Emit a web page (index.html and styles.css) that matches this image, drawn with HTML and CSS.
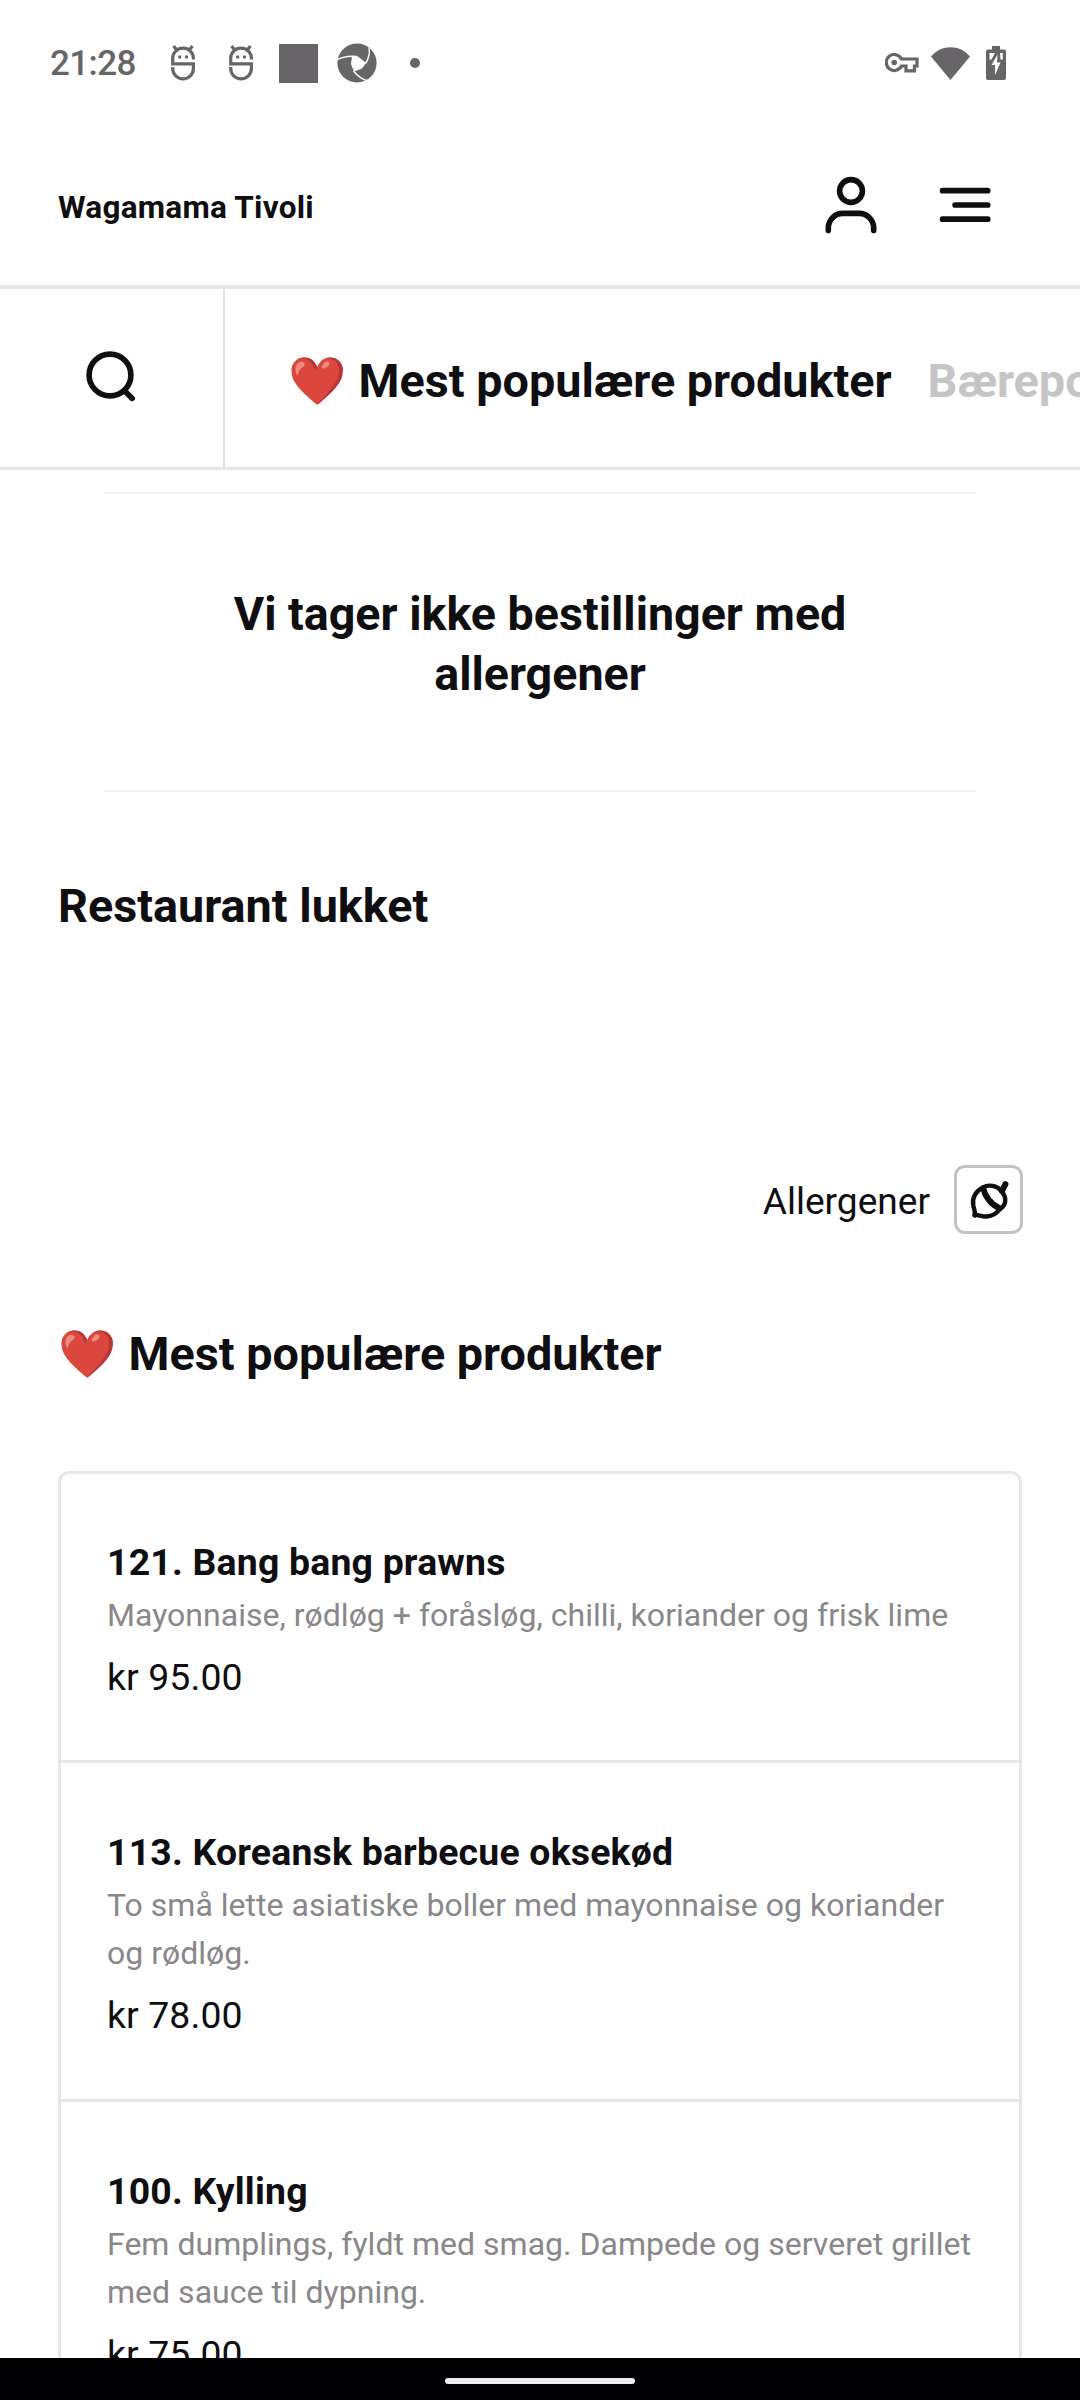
FILE: index.html
```html
<!DOCTYPE html>
<html lang="da">
<head>
<meta charset="utf-8">
<title>Wagamama Tivoli</title>
<link rel="stylesheet" href="styles.css">
</head>
<body>
<div class="screen">
  <div class="status">
    <div class="status-left">
      <span class="time">21:28</span>
      <svg class="bug" viewBox="0 0 24 36"><g fill="none" stroke="#676568" stroke-width="3.2"><path d="M22.4 14.5V13A10.3 9.8 0 0 0 1.7 13v5.8H22.4V23.500a10.3 10.3 0 0 1-20.7 0V22"/><path d="M2.5 1l3.5 4.200M21.500 1L18 5.200"/></g><g fill="#676568"><circle cx="8.700" cy="12" r="1.700"/><circle cx="15.500" cy="12" r="1.700"/></g></svg>
      <svg class="bug" viewBox="0 0 24 36"><g fill="none" stroke="#676568" stroke-width="3.2"><path d="M22.4 14.5V13A10.3 9.8 0 0 0 1.7 13v5.8H22.4V23.500a10.3 10.3 0 0 1-20.7 0V22"/><path d="M2.5 1l3.5 4.200M21.500 1L18 5.200"/></g><g fill="#676568"><circle cx="8.700" cy="12" r="1.700"/><circle cx="15.500" cy="12" r="1.700"/></g></svg>
      <span class="square"></span>
      <svg class="swirl" viewBox="0 0 40 40"><circle cx="20" cy="20" r="19.600" fill="#676568"/><path d="M15 13.500L21 13.500L29 20L25 25.500L17 28.500L14 21Z" fill="#fefefe"/><g fill="none" stroke="#fefefe" stroke-width="1.400"><path d="M0 17Q7 12.500 20 13.500"/><path d="M32 4.500Q33.500 13 28.500 20.500"/><path d="M16.500 28Q23 36 31 38"/></g></svg>
      <span class="dot"></span>
    </div>
    <div class="status-right">
      <svg class="key" viewBox="0 0 34 20"><path d="M16.400 6A8 8 0 1 0 16.400 13H21V17.800H29.500V13H32V6Z" fill="none" stroke="#676568" stroke-width="3.200"/><circle cx="9.200" cy="9.500" r="2.800" fill="#676568"/></svg>
      <svg class="wifi" viewBox="0 0 39 33"><path d="M0 9.500C10-3 29-3 39 9.500L19.500 33Z" fill="#676568"/></svg>
      <svg class="battery" viewBox="0 0 20 34"><path d="M6 0h8v3.500h4a2 2 0 0 1 2 2V32a2 2 0 0 1-2 2H2a2 2 0 0 1-2-2V5.500a2 2 0 0 1 2-2H6Z" fill="#676568"/><path d="M3.500 7H9L5.500 13.500H3.500Z M14 7h2.800v6.500H14.500Z M11.500 8.500L5.500 19h3.500v10l5.500-12.500h-3.500Z" fill="#fefefe"/></svg>
    </div>
  </div>

  <header class="header">
    <span class="brand">Wagamama Tivoli</span>
    <svg class="user" viewBox="0 0 52 58" fill="none" stroke="#0f0e11" stroke-width="5.600" stroke-linecap="round"><circle cx="26" cy="15" r="11.400"/><path d="M3.300 54.400V52A14.600 14.600 0 0 1 17.900 37.400H34.100A14.600 14.600 0 0 1 48.700 52V54.400"/></svg>
    <svg class="menu" viewBox="0 0 52 36" stroke="#0f0e11" stroke-width="5.700" stroke-linecap="round"><path d="M3.600 3.700H48.700M16.100 18H48.700M3.600 32.200H48.700"/></svg>
  </header>

  <nav class="tabs">
    <div class="search"><svg viewBox="0 0 52 52" fill="none" stroke="#0f0e11" stroke-width="5.600"><circle cx="25" cy="25" r="20.900"/><path d="M40 41.300L47.200 48.400" stroke-linecap="round"/></svg></div>
    <div class="tab-list"><span class="tab active"><span class="heart">❤️</span> Mest populære produkter</span><span class="tab">Bærepose</span></div>
  </nav>

  <main class="content">
    <p class="notice">Vi tager ikke bestillinger med allergener</p>
    <h2 class="title closed">Restaurant lukket</h2>
    <div class="allergens">
      <span class="label">Allergener</span>
      <button class="nut" aria-label="Allergener"><svg viewBox="3 3 63 63" fill="none" stroke="#0f0e11" stroke-width="4.400" stroke-linecap="round" stroke-linejoin="round"><path d="M29.300 22.300C21.500 26 18 33 19.200 40C19.700 43.500 21.300 46 21 50C24.500 49.300 27.500 52 33 51.500C39 51 43 48 46 44"/><path d="M29.300 22.300C34.500 19 43 20.700 47.500 26C52.500 32 53 39.500 46 44"/><path d="M29.300 23.500C31 31.500 37 39.500 45 43" stroke-width="6"/><path d="M48 26L51.400 19.200" stroke-width="6"/><path d="M21 50h.1" stroke-width="5.500"/></svg></button>
    </div>
    <h2 class="title"><span class="heart">❤️</span> Mest populære produkter</h2>
    <section class="products">
      <article class="product">
        <h3 class="name">121. Bang bang prawns</h3>
        <p class="desc">Mayonnaise, rødløg + foråsløg, chilli, koriander og frisk lime</p>
        <p class="price">kr 95.00</p>
      </article>
      <article class="product">
        <h3 class="name">113. Koreansk barbecue oksekød</h3>
        <p class="desc">To små lette asiatiske boller med mayonnaise og koriander og rødløg.</p>
        <p class="price">kr 78.00</p>
      </article>
      <article class="product">
        <h3 class="name">100. Kylling</h3>
        <p class="desc">Fem dumplings, fyldt med smag. Dampede og serveret grillet med sauce til dypning.</p>
        <p class="price">kr 75.00</p>
      </article>
    </section>
  </main>
  <div class="navbar"><span class="handle"></span></div>
</div>
</body>
</html>
```
FILE: styles.css
```css
* { box-sizing: border-box; margin: 0; }
body { background: #fefefe; color: #0f0e11; font-family: Roboto, "Liberation Sans", sans-serif; }
svg { display: block; flex: none; }
.screen { width: 1080px; height: 2400px; display: flex; flex-direction: column; overflow: hidden; }

.status { height: 126px; flex: none; display: flex; justify-content: space-between; padding: 0 74px 0 50px; color: #676568; }
.status-left, .status-right { display: flex; align-items: center; }
.time { width: 121px; font-size: 35px; font-weight: 500; letter-spacing: -0.6px; }
.bug { width: 24px; height: 36px; margin-right: 34px; }
.square { width: 39px; height: 39px; margin-left: -8px; background: #676568; }
.swirl { width: 40px; height: 40px; margin-left: 19px; }
.dot { width: 10px; height: 10px; margin-left: 33px; border-radius: 50%; background: #676568; }
.key { width: 34px; height: 20px; margin-right: 12px; }
.wifi { width: 39px; height: 33px; margin-right: 16px; }
.battery { width: 20px; height: 34px; }

.header { height: 163px; flex: none; display: flex; align-items: center; padding: 0 89px 2px 58px; border-bottom: 4px solid #e7e6e9; }
.brand { flex: 1; padding-top: 5px; font-size: 31.5px; font-weight: 700; letter-spacing: 0.25px; }
.user { width: 52px; height: 58px; margin-right: 62px; }
.menu { width: 52px; height: 36px; }

.tabs { height: 181px; flex: none; display: flex; border-bottom: 3px solid #e7e6e9; }
.search { width: 225px; flex: none; display: flex; align-items: center; justify-content: center; padding: 0 1px 4px 0; border-right: 2px solid #e2e1e4; }
.search svg { width: 52px; height: 52px; }
.tab-list { flex: 1; min-width: 0; display: flex; align-items: center; gap: 36px; padding: 6px 0 0 63px; overflow: hidden; white-space: nowrap; }
.tab { font-size: 46.75px; line-height: 60px; font-weight: 700; color: #c5c4c7; }
.tab.active { color: #0f0e11; }
.heart { margin-right: 1px; filter: saturate(0.85) brightness(0.98); }

.content { flex: 1; min-height: 0; overflow: hidden; padding: 22px 58px 0; }
.notice { margin: 0 46px; padding: 90px 80px 86px; border: solid #f2f1f4; border-width: 2px 0; text-align: center; font-size: 46.6px; line-height: 60px; font-weight: 700; }
.title { font-size: 46.75px; line-height: 60px; font-weight: 700; }
.closed { margin: 84px 0 229px; }
.allergens { display: flex; align-items: center; justify-content: flex-end; gap: 24px; margin: 0 -1px 90px 0; }
.label { padding-top: 3px; font-size: 37.1px; }
.nut { width: 69px; height: 69px; padding: 0; border: 3px solid #c2c1c4; border-radius: 11px; background: none; }

.products { margin-top: 87px; border: 3px solid #e7e6e9; border-radius: 11px 11px 0 0; }
.product { padding: 65px 40px 60px 46px; border-bottom: 3px solid #e7e6e9; }
.product:first-child { padding: 64px 40px 59px 46px; }
.name { font-size: 37.4px; line-height: 48px; font-weight: 700; letter-spacing: 0.2px; }
.desc { margin: 5px 0 14px; font-size: 32px; line-height: 48px; letter-spacing: 0.02px; color: #89878a; }
.price { font-size: 37.4px; line-height: 48px; letter-spacing: 0.1px; }

.navbar { height: 42px; flex: none; display: flex; justify-content: center; align-items: flex-start; padding-top: 20px; background: #020103; }
.handle { width: 190px; height: 6px; border-radius: 3px; background: #eeecef; }
```
